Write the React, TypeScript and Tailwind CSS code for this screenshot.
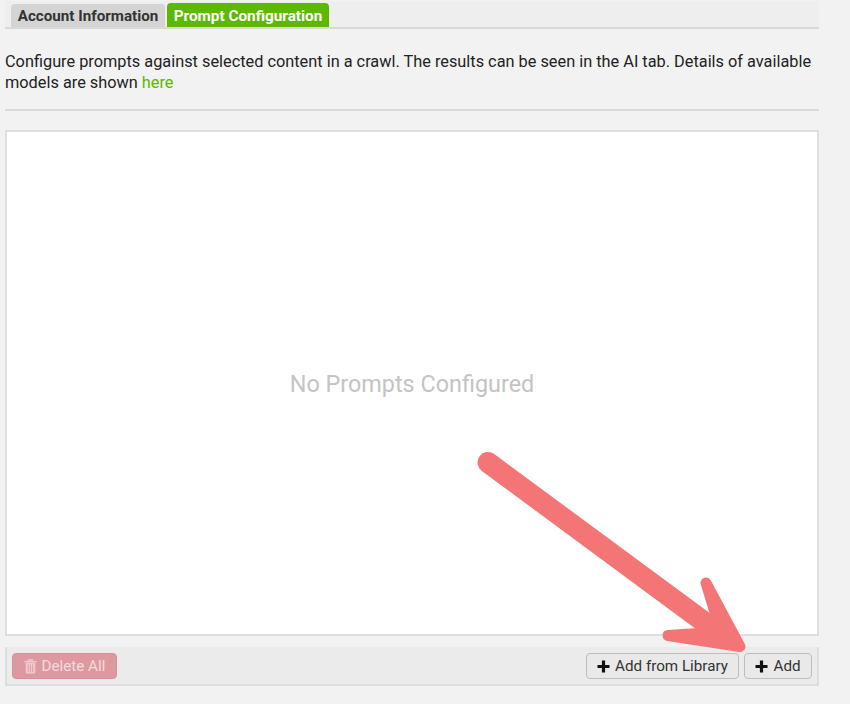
const TrashIcon = () => (
  <svg width="13" height="15" viewBox="0 0 13 15" fill="none" className="text-[#efc9cc]">
    <path d="M4.5 2V1h4v1M0.5 2.7h12" stroke="currentColor" strokeWidth="1.4" />
    <path d="M1.7 4h9.6v9.5a1 1 0 0 1-1 1H2.7a1 1 0 0 1-1-1z" fill="currentColor" />
    <path d="M4.3 5.5v7.5M6.5 5.5v7.5M8.7 5.5v7.5" stroke="#dc9aa0" strokeWidth="0.9" />
  </svg>
);

const PlusIcon = () => (
  <svg width="13" height="13" viewBox="0 0 13 13">
    <path d="M6.5 0.5v12M0.5 6.5h12" stroke="#111" strokeWidth="3.2" />
  </svg>
);

const Arrow = () => (
  <svg width="850" height="704" viewBox="0 0 850 704" className="absolute top-0 left-0 pointer-events-none">
    <path d="M488 462.5L715 630" stroke="#f47575" strokeWidth="21" strokeLinecap="round" fill="none" />
    <path
      d="M706 583L740 646.5L668 635.5L721 632Z"
      fill="#f47575"
      stroke="#f47575"
      strokeWidth="11"
      strokeLinejoin="round"
    />
  </svg>
);

export default function App() {
  return (
    <div className="relative w-[850px] h-[704px] overflow-hidden bg-[#f2f2f2] font-['Roboto',sans-serif] pt-px pl-[5px]">
      <div className="w-[814px] flex flex-col">
        {/* Tabs */}
        <div className="h-[28px] flex items-end gap-[2px] pl-[6px] bg-[#eeeeee] border-b-2 border-[#d9d9d9]">
          <div className="h-[23px] w-[154px] pt-[2px] rounded-t-[4px] bg-[#d4d4d4] text-[#333] text-[15.2px] font-bold flex items-center justify-center">
            Account Information
          </div>
          <div className="h-[24px] w-[162px] pt-[2px] rounded-t-[4px] bg-[#5cb800] text-white text-[15.3px] font-bold flex items-center justify-center">
            Prompt Configuration
          </div>
        </div>

        <p className="mt-[22px] text-[16.32px] leading-[21px] text-[#222]">
          Configure prompts against selected content in a crawl. The results can be seen in the AI tab. Details of available models are shown <span className="text-[#5cb800]">here</span>
        </p>

        <div className="mt-[16px] h-[2px] bg-[#d9d9d9]" />

        <div className="mt-[19px] h-[506px] pt-[3px] bg-white border-2 border-[#dedede] flex items-center justify-center">
          <span className="text-[23.4px] text-[#c4c4c4]">No Prompts Configured</span>
        </div>

        {/* Footer */}
        <div className="mt-[11px] h-[39px] bg-[#ebebeb] border-l-2 border-r-2 border-b-2 border-[#dedede] flex items-center justify-between pl-[5px] pr-[5px]">
          <button className="w-[105px] h-[26px] pt-px rounded-[4px] bg-[#dc9aa0] border border-[#d79299] text-[#f3dadc] text-[15.2px] flex items-center justify-center gap-[5px]">
            <TrashIcon />
            Delete All
          </button>
          <div className="flex gap-[5px]">
            <button className="w-[153px] h-[26px] pt-px rounded-[4px] bg-[#e9e9e9] border border-[#bdbdbd] text-[#333] text-[15.2px] flex items-center justify-center gap-[5px]">
              <PlusIcon />
              Add from Library
            </button>
            <button className="w-[68px] h-[26px] pt-px rounded-[4px] bg-[#e9e9e9] border border-[#bdbdbd] text-[#333] text-[15.2px] flex items-center justify-center gap-[5px]">
              <PlusIcon />
              Add
            </button>
          </div>
        </div>
      </div>
      <Arrow />
    </div>
  );
}
